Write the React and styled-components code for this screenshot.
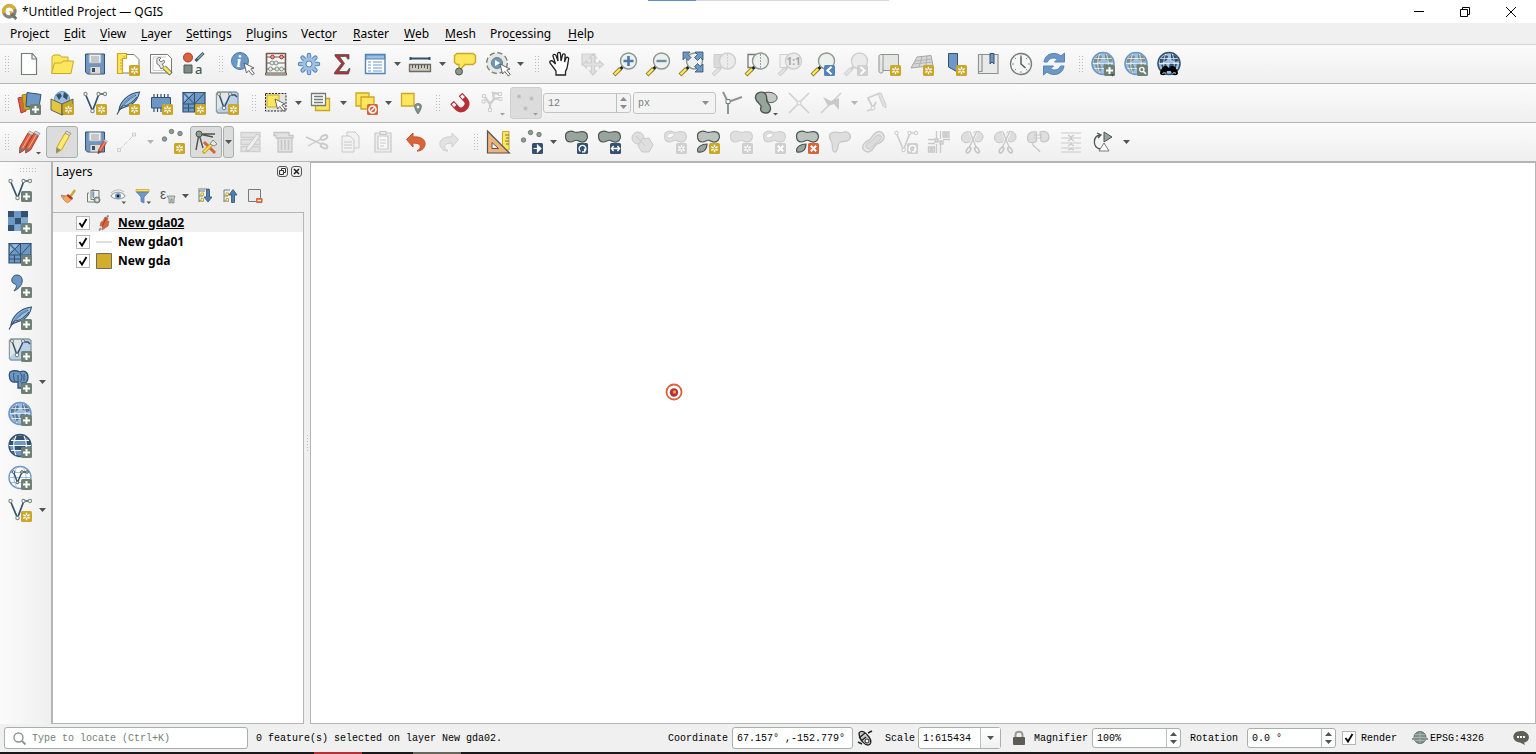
import React from "react";
import styled, { createGlobalStyle, css } from "styled-components";

const C = {
    blue: "#6d97c4",
    sky: "#9dbfe3",
    navy: "#34516f",
    green: "#727e73",
    dark: "#4d5752",
    leaf: "#98a59c",
    yellow: "#fbe65c",
    gold: "#cba728",
    red: "#b53037",
    orange: "#d9643a",
    line: "#b5b5b5",
    off: "#cfcfcf",
    offFill: "#e2e2e2",
};

const uiFont = `"Noto Sans", "Open Sans", sans-serif`;
const monoFont = `"Liberation Mono", "DejaVu Sans Mono", monospace`;

const GlobalStyle = createGlobalStyle`
    * {
        box-sizing: border-box;
    }
    body {
        margin: 0;
        overflow: hidden;
        background: #f0f0f0;
        color: #000;
        font-family: ${uiFont};
        font-size: 12px;
    }
    button, input, select {
        font: inherit;
        color: inherit;
        margin: 0;
        padding: 0;
        border: 0;
        border-radius: 0;
        background: none;
        outline: none;
    }
    svg {
        display: block;
        flex: none;
        overflow: visible;
    }
`;

/* ---------- icons ---------- */

const Svg = ({ children, size = 24, box = 24 }) => (
    <svg width={size} height={size} viewBox={`0 0 ${box} ${box}`} fill="none" aria-hidden="true">
        {children}
    </svg>
);

const badgeFill = {
    star: C.gold, add: "#6f8174", del: C.orange, go: C.navy, turn: C.navy, scale: C.navy, prev: "#5584b8", find: "#6f8174",
    offStar: C.off, offDel: C.off, offNext: C.off, offTurn: C.off,
};

const Badge = ({ kind }) => (
    <g transform="translate(13 13)" stroke="#fff" strokeWidth="1.6">
        <rect width="11" height="11" rx="1.5" fill={badgeFill[kind]} stroke="none" />
        {(kind === "star" || kind === "offStar") && (
            <>
                <path d="M5.5 1.8v7.4M2.3 3.6l6.4 3.8M8.7 3.6 2.3 7.4" strokeWidth="1.4" />
                <circle cx="5.5" cy="5.5" r="1.2" fill={badgeFill[kind]} stroke="none" />
            </>
        )}
        {kind === "add" && <path d="M5.5 2v7M2 5.5h7" strokeWidth="2" />}
        {(kind === "del" || kind === "offDel") && <path d="m2.8 2.8 5.4 5.4m0-5.4L2.8 8.2" strokeWidth="2" />}
        {kind === "go" && <path d="M1.5 5.5h6M5.5 2.2l3.4 3.3-3.4 3.3z" fill="#fff" strokeWidth="1.2" />}
        {(kind === "turn" || kind === "offTurn") && <path d="M3.5 8.5a3.4 3.4 0 1 1 4 0M7.6 5.6v3.2H5" strokeWidth="1.3" />}
        {kind === "scale" && <path d="M1.5 5.5h8M3.6 3 1.4 5.5 3.6 8M7.4 3l2.2 2.5L7.4 8" strokeWidth="1.4" />}
        {kind === "prev" && <path d="M7.6 1.8 3.4 5.5l4.2 3.7" strokeWidth="2" />}
        {kind === "offNext" && <path d="m3.4 1.8 4.2 3.7-4.2 3.7" strokeWidth="2" />}
        {kind === "find" && (
            <>
                <circle cx="4.8" cy="4.6" r="2.2" strokeWidth="1.3" />
                <path d="m6.4 6.4 2.6 2.6" strokeWidth="1.5" />
            </>
        )}
    </g>
);

const MiniArrow = ({ off }) => <path d="M19 22h5l-2.5 2.5z" fill={off ? "#9b9b9b" : C.dark} />;

const Cursor = ({ x, y }) => (
    <path transform={`translate(${x} ${y})`} d="M0 0l2.5 10 2.3-2.5 3.5 4.5 2-1.5-3.5-4.5 3.2-1z" fill="#fff" stroke="#555" strokeWidth=".9" />
);

const Gear = () => (
    <>
        <g stroke="#5584b8" strokeWidth="4.5" strokeLinecap="round">
            <path d="M12 3v18M3 12h18M5.6 5.6l12.8 12.8M18.4 5.6 5.6 18.4" />
        </g>
        <g stroke={C.sky} strokeWidth="2.5" strokeLinecap="round">
            <path d="M12 3v18M3 12h18M5.6 5.6l12.8 12.8M18.4 5.6 5.6 18.4" />
        </g>
        <circle cx="12" cy="12" r="6.5" fill={C.sky} />
        <circle cx="12" cy="12" r="3" fill="#f5f5f5" stroke="#5584b8" />
    </>
);

const Lens = ({ off, children, badge, behind }) => (
    <>
        {behind}
        <path d="M10 14.5 6 18.5" stroke={off ? C.off : "#222"} strokeWidth="3" />
        <path d="M7.5 16.5 1 23" stroke={off ? C.off : "#8b7a2c"} strokeWidth="4" />
        <path d="M7 17 1.6 22.4" stroke={off ? C.offFill : C.yellow} strokeWidth="2.4" />
        <circle cx="15.5" cy="9" r="8" fill={off ? "#ebebeb" : "#edf0ee"} stroke={off ? C.off : "#8b9890"} strokeWidth="1.4" />
        {children}
        {badge && <Badge kind={badge} />}
    </>
);

const Folder = () => (
    <g stroke={C.gold} fill={C.yellow}>
        <path d="M2 21.5V4.5l2-1.5h6l1.5 2H18v4" />
        <path d="M1.5 21.5 4.5 11h7L13 9h10.5L21 21.5z" />
    </g>
);

const Floppy = () => (
    <>
        <path d="M2.5 2h19v20h-17l-2-2z" fill={C.blue} stroke={C.navy} />
        <path d="M6 2.5h12V11H6z" fill="#f1f1f1" stroke="#9aa8b5" />
        <path d="M8 5h8M8 7h8M8 9h8" stroke="#9b9b9b" />
        <path d="M7 14.5h10.5V22H7z" fill="#dcdcdc" stroke="#8e8e8e" />
        <path d="M9 16h3v4H9z" fill={C.navy} />
    </>
);

const Pencil = ({ body = C.yellow, edge = C.gold, tip = "#888" }) => (
    <>
        <path d="M7 17 15 3l4.500 2.500-8 14.500-5 3z" fill={body} stroke={edge} />
        <path d="m9.5 18 8-13.500" stroke="#fff" opacity=".5" />
        <path d="M15 3 16.500 1 21 3.500l-1.500 2z" fill="#ddd" stroke="#999" />
        <path d="m6.500 17.500 4.500 2.600L6 23z" fill={tip} />
    </>
);

const Globe = ({ land = "#7d8f86", stroke = C.blue, badge }) => (
    <>
        <circle cx="12" cy="11.5" r="11.3" fill={C.sky} />
        <path d="M3 7l5-4 3 1-1 4-3 2-4 1zM14 2l5 2 3 5-4 1-4-3zM13 11l7 1-2 6-4 2-2-5zM4 13l5-1 2 5-3 4z" fill={land} />
        <path d="M1 11.5h22M3 6.500h18M3 16.500h18M9 1.500c-3 6-3 14 0 20M15 1.500c3 6 3 14 0 20" stroke="#fff" strokeWidth=".9" opacity=".75" />
        <circle cx="12" cy="11.5" r="11" stroke={stroke} strokeWidth="1.5" />
        {badge && <Badge kind={badge} />}
    </>
);

const Vee = ({ stroke = C.navy, dot = "#7e8c83" }) => (
    <>
        <path d="M3 4.500 9.500 20 15.500 4M16 3h6" stroke={stroke} strokeWidth="1.7" />
        <g fill="#fff" stroke={dot} strokeWidth="1.1">
            <circle cx="2.5" cy="3" r="1.6" />
            <circle cx="15.5" cy="3" r="1.6" />
            <circle cx="22" cy="3" r="1.6" />
            <circle cx="9.5" cy="20" r="1.7" />
        </g>
    </>
);

const Mesh = () => (
    <>
        <path d="M1 1.5h22V21H1z" fill={C.blue} stroke={C.navy} strokeWidth="1.2" />
        <path d="M1 13h22M12.5 1.5V21M1 1.5 12.5 13M12.5 1.5 1 13M12.5 13 23 1.5M1 17h11.5M6.5 13v8" stroke={C.navy} />
        <path d="M2 4l3 3-3 3zM4 2.500h6L7 6z" fill={C.sky} />
    </>
);

const Feather = () => (
    <>
        <path d="M3 19C4 11 12 2 23.500 1c-1 6-4 10-9 13-4 2-8 2-11.500 5z" fill={C.sky} stroke={C.navy} strokeWidth="1.1" />
        <path d="M1 23.500C5 15 12 8 20 4M8 15c5-1 9-4 13-9" stroke={C.navy} strokeWidth="1.1" />
        <path d="M7 14c3-5 7-8 12-10" stroke={C.blue} strokeWidth="2" />
    </>
);

const VirtualBox = () => (
    <>
        <path d="M1.500 2.500 3 1h18l2 1.500V22H3l-1.500-1.500z" fill="#b9d0e8" stroke="#8a9ba5" strokeWidth="1.4" />
        <path d="M2.200 2H13v7l-11 10z" fill="#e3e7e4" />
        <path d="m4 3 5 14 6-13h5l2 2" stroke={C.navy} strokeWidth="1.5" />
        <g fill="#fff" stroke={C.green}>
            <circle cx="4" cy="3" r="1.5" />
            <circle cx="15" cy="3" r="1.5" />
            <circle cx="9" cy="17" r="1.8" />
        </g>
    </>
);

const blobPath = "M1.500 6C1.500 1 7 .5 10.500 2c3 1.200 5-.8 8.500-.3 5 .6 5.500 6.300 3 8.800-2.500 2.500-6 1.500-8.500 0-2.500-1.200-4 1.500-7 1.500-3.500 0-5-2.500-5-6z";

const Blob = ({ off, hole, leaf, badge }) => (
    <>
        <path d={blobPath} fill={off ? "#dfdfdf" : leaf ? "#bcc2be" : C.leaf} stroke={off ? C.off : C.dark} strokeWidth="1.2" />
        {hole && <path d="M4 6.500C4 3 11 2 11 4.500s-6 5.500-7 2z" fill="#f9f9f9" stroke={off ? C.off : C.dark} />}
        {leaf && <path d="M2 22c-2-5 4-8 9-8 0 6-4 9-9 8z" fill={off ? C.offFill : C.leaf} stroke={off ? C.off : C.dark} strokeWidth="1.2" />}
        {badge && <Badge kind={badge} />}
    </>
);

const CutBlobs = () => (
    <g stroke="#c6c6c6" strokeWidth="1.3">
        <g fill="#dedede" strokeWidth="1">
            <path d="M1.500 8c0-5 4-7 9-6l1 9c-4 3-10 2-10-3z" />
            <path d="M14 2c5-2 9 1 9 5s-4 6-8 4z" />
        </g>
        <path d="m9.500 17 7-15M16 17 10 2" stroke="#f5f5f5" strokeWidth="3" />
        <path d="m9.500 17 7-15M16 17 10 2" />
        <g fill="#f5f5f5" strokeWidth="1.7">
            <ellipse cx="8.500" cy="20" rx="1.700" ry="3.200" transform="rotate(30 8.500 20)" />
            <ellipse cx="17" cy="20" rx="1.700" ry="3.200" transform="rotate(-30 17 20)" />
        </g>
    </g>
);

const Dots = () => (
    <g fill="#8f9c93" stroke={C.green}>
        <circle cx="3.5" cy="11" r="2.2" />
        <circle cx="10.5" cy="3.500" r="2.2" />
        <circle cx="19" cy="5.5" r="2.2" />
    </g>
);

const icons = {
    page: <path d="M4.500 1.500h11l4 5v16h-15zM15 1.500V7h4.500" fill="#fff" stroke={C.green} strokeWidth="1.2" />,
    folder: <Folder />,
    floppy: <Floppy />,
    layout: (
        <>
            <path d="M4 2.500h14l5 5V21H4z" fill="#fff" stroke={C.green} />
            <path d="M1.500 1.500h9v5h-4v15h-5z" fill={C.yellow} stroke={C.gold} strokeWidth="1.2" />
            <path d="M4 8h2.500M4 11h2.500M4 14h2.500M4 17h2.500M8 4v2.500" stroke={C.gold} />
            <Badge kind="star" />
        </>
    ),
    layoutManager: (
        <>
            <path d="M1.500 2.500h17l4 4V21h-21z" fill="#fff" stroke={C.green} />
            <path d="M4 5h13M4 5v13.500h14" stroke="#ccc" />
            <path d="M8 9c-1-4 3-4 4-3l-2 2 2 2 3-2c1 3 0 4-2 4l2 3-3 2-2-4c-1 0-3-1-2-4z" fill="#e9e9e9" stroke="#777" />
            <path d="m15 15 7 7" stroke={C.dark} strokeWidth="4.5" />
            <path d="m15 15 6.500 6.500" stroke={C.yellow} strokeWidth="3" />
        </>
    ),
    style: (
        <>
            <circle cx="6" cy="5.5" r="4.5" fill={C.orange} stroke={C.red} />
            <path d="m13.500 9 8-8" stroke={C.navy} strokeWidth="3" />
            <path d="m15.500 7 5.500-5.500" stroke="#8aa79a" strokeWidth="1.5" />
            <path d="M2 13h8v8H2z" fill="#7c8c82" stroke={C.dark} />
            <text x="13" y="21.5" fontFamily="Noto Sans" fontSize="13" fontWeight="500" fill={C.dark}>a</text>
        </>
    ),
    identify: (
        <>
            <circle cx="9" cy="9" r="8.5" fill={C.blue} stroke="#4f7cad" />
            <text x="5.5" y="14.5" fontFamily="Liberation Serif" fontSize="17" fontStyle="italic" fontWeight="bold" fill="#fff">i</text>
            <Cursor x={13} y={11} />
        </>
    ),
    abacus: (
        <>
            <path d="M2.500 1.500h19M2.500 1v21M21.500 1v21" stroke="#6b5f55" strokeWidth="1.6" />
            <path d="M1.500 21h21v2h-21z" fill="#d8d2ca" stroke="#6b5f55" />
            <path d="M3 5h18M3 11h18M3 17h18" stroke="#6b5f55" />
            <g fill="#ef9a80" stroke={C.red}>
                <circle cx="8.5" cy="5" r="1.9" />
                <circle cx="17.5" cy="5" r="1.9" />
            </g>
            <g fill="#e6ece8" stroke="#80908a">
                <circle cx="8" cy="11" r="2" />
                <circle cx="12" cy="11" r="2" />
                <circle cx="6.5" cy="17" r="2" />
                <circle cx="13" cy="17" r="2" />
                <circle cx="17.5" cy="17" r="2" />
            </g>
        </>
    ),
    gear: <Gear />,
    sigma: <path d="M5 2.500h14V7h-1.500c-.5-2-1-2.500-3-2.500h-5l5 7-6 8h7c2 0 2.500-.5 3.500-3h1L18.500 22h-14v-1.500l7-9L5 4z" fill={C.red} stroke={C.dark} strokeWidth=".8" />,
    table: (
        <>
            <path d="M2.500 2.500H22v19H2.500z" fill="#fff" stroke="#5584b8" strokeWidth="1.4" />
            <path d="M3 3h18.500v4H3z" fill={C.sky} stroke="#5584b8" />
            <path d="M5 10h3M10 10h9M5 13h3M10 13h9M5 16h3M10 16h9M5 19h3M10 19h9" stroke={C.blue} strokeWidth="1.2" />
        </>
    ),
    measure: (
        <>
            <path d="M2 6.500h20M2.500 5v3M21.500 5v3" stroke={C.navy} strokeWidth="2" />
            <path d="M1.500 12.500h21v7h-21z" fill="#cfc9be" stroke="#6c6c66" strokeWidth="1.3" />
            <path d="M4.500 13v3M7.500 13v3M10.500 13v4M13.500 13v3M16.500 13v3M19.500 13v4" stroke="#555" />
        </>
    ),
    tip: (
        <>
            <path d="M4 1.500h16l2.500 2v7L20 12.500h-8L6 19v-6.500H4L1.500 10.500v-7z" fill={C.yellow} stroke={C.gold} strokeWidth="1.4" />
            <circle cx="6" cy="19.5" r="3.5" fill="#8a978e" stroke={C.dark} />
        </>
    ),
    action: (
        <>
            <circle cx="11" cy="11" r="9" stroke={C.green} strokeWidth="4" strokeDasharray="4.700 2.360" strokeLinejoin="round" />
            <circle cx="11" cy="11" r="8.5" fill="#e4e7e5" stroke="#e4e7e5" strokeWidth="2.500" />
            <circle cx="11" cy="11" r="5.5" fill={C.blue} stroke={C.green} />
            <path d="M9 8v6l5-3z" fill="#fff" />
            <Cursor x={14} y={12} />
        </>
    ),
    hand: (
        <path
            transform="translate(1 0)"
            d="M8 23v-4l-6-8c-1-2 1.500-3 3-1.500L7.500 12 5 4c-.3-2 2.300-2.300 3-.5L10 9l-.5-7c0-2 3-2 3 0l.5 7 1.500-6c.5-2 3-1.300 2.700.6L16.500 10l1.500-4c1-1.500 3-.6 2.600 1.200C19.500 12 20 16 17.500 19.500V23z"
            fill="#fff"
            stroke="#222"
            strokeWidth="1.3"
        />
    ),
    panSel: (
        <g fill={C.offFill} stroke={C.off} strokeWidth="1.2">
            <path d="M2 2h13v11H2z" />
            <path d="m13 2 3.500 4h-2v5h5V9l4 3.500-4 3.500v-2h-5v5h2L13 23l-3.500-4h2v-5h-5v2l-4-3.500L6.500 9v2h5V6h-2z" />
        </g>
    ),
    zoomIn: <Lens><path d="M15.5 4v10M10.500 9h10" stroke="#4779ad" strokeWidth="2.6" /></Lens>,
    zoomOut: <Lens><path d="M10.500 9h10" stroke="#6c8f9a" strokeWidth="2.4" /></Lens>,
    zoomFull: (
        <Lens>
            <path d="M4 0h7L9 2.500l3 3-3 3-3-3L4 8zM24 0v8l-2.500-2.500-3 3-3-3 3-3L16 0zM24 20h-8l2.500-2.500-3-3 3-3 3 3L24 12z" fill={C.blue} stroke={C.navy} strokeWidth=".8" />
        </Lens>
    ),
    zoomSel: <Lens off behind={<path d="M2 2.500h13v13H2z" fill="#dadada" stroke={C.off} />}><path d="M15.500 2v14" stroke={C.off} strokeDasharray="2 1" /></Lens>,
    zoomLayer: <Lens behind={<path d="M3 2.500h12v13H3z" fill="#f8f8f8" stroke={C.green} strokeWidth="1.3" />}><path d="M15.500 2v14" stroke={C.leaf} strokeDasharray="2 1" /></Lens>,
    zoomNative: <Lens off behind={<path d="M2 2.500h13v13H2z" fill="#f2f2f2" stroke={C.off} />}><text x="8.500" y="12.5" fontFamily="Noto Sans" fontSize="10" fontWeight="bold" fill="#a5a5a5">1:1</text></Lens>,
    zoomLast: <Lens badge="prev" />,
    zoomNext: <Lens off badge="offNext" />,
    newMap: (
        <>
            <path d="M4 2.500h17.500v16H6M2 4v15.500c0 2 4 2 4 0V4c0-2-4-2-4 0z" fill="#e4e6e4" stroke="#8b958e" />
            <Badge kind="star" />
        </>
    ),
    new3d: (
        <>
            <path d="m7 5 14-1.500 2 10L1 16z" fill="#d8d8d8" stroke="#a5a5a5" />
            <path d="m5 9 17-2M3 12l19-2M12 4.500 9 15M17 4l-1 10" stroke="#b2b2b2" />
            <Badge kind="star" />
        </>
    ),
    bookmark: (
        <>
            <path d="M5.500 1.500h9V20l-9-5z" fill={C.blue} stroke={C.navy} />
            <Badge kind="star" />
        </>
    ),
    bookmarks: (
        <>
            <path d="M2.500 2.500H22v19H2.500zM6 2.500v17H2.500" fill="#e9e9e9" stroke="#8b958e" strokeWidth="1.2" />
            <path d="M14 1.500h4V12l-2-2-2 2z" fill={C.blue} stroke={C.navy} />
        </>
    ),
    clock: (
        <>
            <circle cx="12" cy="12" r="10.5" fill="#f6f6f6" stroke={C.green} strokeWidth="1.3" />
            <path d="M12 3v2M12 19v2M3 12h2M19 12h2M5.600 5.600 7 7M17 17l1.400 1.400M18.400 5.600 17 7M7 17l-1.400 1.400" stroke={C.blue} />
            <path d="M12 4.500V12l4.500 4" stroke={C.dark} strokeWidth="1.4" />
        </>
    ),
    refresh: (
        <g fill={C.blue} stroke="#5584b8">
            <path d="M2 10C3 4 7 1.500 12 1.500c3 0 5 1 7 2.500l3.500-3V10h-10l3-3C12 5 7 6 5.500 10z" />
            <path d="M22 14c-1 6-5 8.500-10 8.500-3 0-5-1-7-2.500l-3.500 3V14h10l-3 3c3.500 2 8.500 1 10-3z" />
        </g>
    ),
    globeAdd: <><Globe badge="add" /><MiniArrow /></>,
    globeFind: <Globe badge="find" />,
    globeBino: (
        <>
            <Globe land={C.navy} stroke={C.navy} />
            <path d="M4 21c1-4 3-7 5-7h2l1 1.500h2l1-1.500h2c2 0 4 3 5 7 0 3-6 3-6.500 0l-.5-2h-4l-.5 2C10 24 4 24 4 21z" transform="translate(-1 0)" fill="#000" />
            <path d="M5.500 21.500a2 1.300 0 0 1 3.500 0M15.500 21.500a2 1.300 0 0 1 3.500 0" stroke="#fff" />
        </>
    ),
    sources: (
        <>
            <path d="m1 7 5-1 3 14-5 2z" fill={C.orange} stroke={C.red} />
            <path d="m5 4 6-1 2 15-6 1z" fill={C.gold} stroke="#9d801c" />
            <path d="m10 1.500 14 2-2 13-13-1z" fill={C.blue} stroke={C.navy} />
            <Badge kind="add" />
        </>
    ),
    geopackage: (
        <>
            <circle cx="12" cy="8" r="7.5" fill={C.sky} stroke={C.blue} />
            <path d="M6 4l4-2 2 3-3 4zM14 1l4 3-1 5-4-3z" fill={C.navy} />
            <path d="m1 8 11 5v11L1 19z" fill="#e5c53c" stroke={C.dark} strokeWidth=".9" />
            <path d="m23 8-11 5v11l11-5z" fill={C.gold} stroke={C.dark} strokeWidth=".9" />
            <Badge kind="star" />
        </>
    ),
    veeStar: <><Vee /><Badge kind="star" /></>,
    veeAdd: <><Vee /><Badge kind="add" /></>,
    featherStar: <><Feather /><Badge kind="star" /></>,
    featherAdd: <><Feather /><Badge kind="add" /></>,
    chip: (
        <>
            <path d="M5 3v18M8.500 3v18M12 3v18M15.500 3v18M19 3v18" stroke={C.navy} strokeWidth="1.2" />
            <path d="M2.500 6.500h19V17h-19z" fill={C.blue} stroke={C.navy} />
            <Badge kind="star" />
        </>
    ),
    meshStar: <><Mesh /><Badge kind="star" /></>,
    meshAdd: <><Mesh /><Badge kind="add" /></>,
    virtualStar: <><VirtualBox /><Badge kind="star" /></>,
    virtualAdd: <><VirtualBox /><Badge kind="add" /></>,
    select: (
        <>
            <path d="M1.500 2.500H22V20H1.500z" fill="#e4e4e4" stroke="#222" strokeDasharray="2 1.2" />
            <path d="M3 4h12v12H3z" fill={C.yellow} stroke={C.gold} />
            <Cursor x={11} y={8} />
        </>
    ),
    selectForm: (
        <>
            <path d="M6.500 7.500h14v12h-14z" fill={C.yellow} stroke={C.gold} strokeWidth="1.3" />
            <path d="M2.500 2.500h14v12h-14z" fill="#fff" stroke={C.green} strokeWidth="1.3" />
            <path d="M5 5.500h9M5 8.500h9M5 11.500h9" stroke={C.green} strokeWidth="1.5" />
        </>
    ),
    deselect: (
        <>
            <path d="M2 2h13v13H2z" fill={C.yellow} stroke={C.gold} strokeWidth="1.3" />
            <path d="M7 6h13v12H7z" fill={C.yellow} stroke={C.gold} strokeWidth="1.3" />
            <rect x="13" y="13" width="11" height="11" rx="1.5" fill={C.orange} />
            <circle cx="18.5" cy="18.5" r="3.5" stroke="#fff" strokeWidth="1.5" />
            <path d="m16 21 5-5" stroke="#fff" strokeWidth="1.5" />
        </>
    ),
    selectPin: (
        <>
            <path d="M2.500 2.500H15V15H2.500z" fill={C.yellow} stroke={C.gold} strokeWidth="1.3" />
            <path d="M19 12.500c-5 0-4 5 0 10.500 4-5.500 5-10.500 0-10.500z" fill="#84928a" stroke={C.dark} strokeWidth=".6" />
            <circle cx="19" cy="16" r="1.3" fill="#fff" />
        </>
    ),
    magnet: (
        <>
            <path d="m4 11.500 5.500 6c4.500 4.500 12.500-3 8.500-8L12.500 3.500" stroke={C.red} strokeWidth="5" />
            <path d="m4.800 12.400 2.400 2.600M13.300 4.400 15.700 7" stroke="#fff" strokeWidth="3" />
        </>
    ),
    topology: (
        <>
            <path d="m3 5 6 8 4-5 6-1M13 8l-1-6 7 1M9 13v6" stroke={C.off} strokeWidth="2.4" />
            <g fill="#f2f2f2" stroke={C.off}>
                <path d="M1.500 3.500h3v3h-3zM17.500 1.500h3v3h-3zM18 6.500h3v3h-3zM7.500 17.500h3v3h-3zM1 9h3v3H1z" />
            </g>
            <MiniArrow off />
        </>
    ),
    snapDots: (
        <>
            <path d="M3.500 4h3v3h-3zM16 6h3v3h-3zM10 16h3v3h-3z" fill="#b9b9b9" stroke="#c8c8c8" />
            <MiniArrow off />
        </>
    ),
    junction: (
        <>
            <path d="m2 1 5 10v12M7 11l14-5" stroke="#8c9990" strokeWidth="2" />
            <path d="M5 8.500h4v4H5z" fill="#fff" stroke={C.green} />
        </>
    ),
    blobs: (
        <>
            <path d="M10 2c5-2 12 0 13 4s-5 7-9 5z" fill="#c4cac6" stroke={C.dark} />
            <path d="M1.500 7C1 1 10-1 12 4c2 5-1 5 2 8 4 4 3 10-2 10s-6-3-5-6-5-4-5.500-9z" fill={C.leaf} stroke={C.dark} strokeWidth="1.4" />
            <MiniArrow />
        </>
    ),
    cross: <><path d="m2 2 20 20M22 2 2 22" stroke={C.off} strokeWidth="1.6" /><circle cx="12" cy="12" r="2" fill="#f2f2f2" stroke={C.off} /></>,
    crossFill: <><path d="M1 22 21 2" stroke={C.off} strokeWidth="1.6" /><path d="m3 6 8 4 8-3v12l-5-6-6 2z" fill="#c9c9c9" /></>,
    trace: <><path d="m2 20 6-2M8 17 3 7l12-5M8 17l3-6" stroke={C.off} strokeWidth="1.8" /><circle cx="8" cy="17" r="2" fill="#f2f2f2" stroke={C.off} /><path d="m13 3 3-1 5 12v3l-3-2z" fill={C.offFill} stroke={C.off} /></>,
    edits: (
        <>
            <g transform="translate(-4 0)"><Pencil body={C.orange} edge={C.red} tip="#777" /></g>
            <g transform="translate(2 0)"><Pencil body={C.orange} edge={C.red} tip="#777" /></g>
            <MiniArrow />
        </>
    ),
    pencil: <Pencil />,
    saveEdits: <><Floppy /><g transform="translate(11 9) scale(.64)"><Pencil body={C.orange} edge={C.red} tip="#555" /></g></>,
    lineOff: <><path d="M3 20 19 4" stroke={C.off} strokeDasharray="5 2" /><path d="M1.500 18.500h3v3h-3zM16.500 3h3v3h-3z" fill="#eee" stroke={C.off} /></>,
    addPoint: <><g transform="translate(0 -2)"><Dots /></g><Badge kind="star" /></>,
    vertex: (
        <>
            <path d="M3 4h18M5 4 2 20M5 4l4 14M5 4l14 3" stroke={C.dark} strokeWidth="1.4" />
            <circle cx="5" cy="4" r="3" fill="#8f9c93" stroke={C.dark} />
            <path d="m10 12 11 11" stroke={C.orange} strokeWidth="3" />
            <path d="m9 23 9-9" stroke={C.gold} strokeWidth="3.5" />
            <path d="m10 22 8-8" stroke={C.yellow} strokeWidth="1.6" />
            <path d="m16 14 3-4 4 4-3 2z" fill="#e8e8e8" stroke="#888" />
        </>
    ),
    attrsOff: <><path d="M2 2.500h19v5H2zM2 9.500h19v5H2zM2 16.500h19v5H2z" fill={C.offFill} stroke={C.off} strokeWidth="1.3" /><path d="M8 17 18 4l3 2-10 14-4 1z" fill="#eee" stroke="#c6c6c6" /></>,
    trashOff: <><path d="M2 2.500h15v3h4V8H4V5.500H2zM6 8h14v14H6z" fill={C.offFill} stroke="#c6c6c6" strokeWidth="1.3" /><path d="M9.500 10v10M13 10v10M16.500 10v10" stroke="#c6c6c6" strokeWidth="1.5" /></>,
    cutOff: (
        <g stroke="#c9c9c9" strokeWidth="1.4">
            <path d="m1 7 15 7M3 16l13-7" />
            <g fill="#f5f5f5" strokeWidth="1.8">
                <ellipse cx="19" cy="7.5" rx="3.6" ry="2" transform="rotate(-24 19 7.5)" />
                <ellipse cx="19" cy="16" rx="3.6" ry="2" transform="rotate(24 19 16)" />
            </g>
        </g>
    ),
    copyOff: <g fill="#f2f2f2" stroke="#c9c9c9"><path d="M9 2h8l4 4v12H9z" /><path d="M4 6h8l4 4v12H4z" /><path d="M6 12h8M6 15h8M6 18h8" /></g>,
    pasteOff: <g fill="#ededed" stroke="#c9c9c9" strokeWidth="1.2"><path d="M4 3h16v19H4z" /><path d="M7 6h10v13H7z" fill="#f8f8f8" /><path d="M9 1.500h6v3H9zM9 10h6M9 13h6M9 16h4" /></g>,
    undo: <path d="M2.500 9.500 9 3v4c8-1 13 3 12 8-1 4-4 6-8 6 5-3 5-8-4-8v4z" fill={C.orange} stroke="#c8542c" />,
    redoOff: <path d="M21.500 9.500 15 3v4C7 6 2 10 3 15c1 4 4 6 8 6-5-3-5-8 4-8v4z" fill={C.offFill} stroke={C.off} />,
    digitize: (
        <>
            <path d="M16.500 1.500H23V20h-6.500z" fill={C.yellow} stroke={C.gold} />
            <path d="M1.500 1v22h22z" fill="#eeb27a" stroke={C.dark} strokeWidth="1.2" />
            <path d="M6 12.500v6h6.500z" fill="#fff" stroke={C.dark} />
            <path d="M19 5h4M20 8h3M19 11h4M20 14h3" stroke={C.dark} strokeWidth=".8" />
        </>
    ),
    move: <><g transform="translate(1 -1)"><Dots /></g><Badge kind="go" /></>,
    rotate: <Blob badge="turn" />,
    scale: <Blob badge="scale" />,
    simplifyOff: <g fill="#dedede" stroke="#c9c9c9"><circle cx="8" cy="8" r="6" /><path d="m12 9 7-1 4 7-4 7h-7l-4-6z" /><path d="m6 6 9 10" /></g>,
    ringOff: <Blob off hole badge="offStar" />,
    part: <Blob leaf badge="star" />,
    fillRingOff: <Blob off badge="offStar" />,
    delRingOff: <Blob off hole badge="offDel" />,
    delPart: <Blob leaf badge="del" />,
    reshapeOff: <path d="M2 4c4-4 9 0 14-2 6-1 8 5 5 8-4 3-8 0-10 3s0 8-4 9c-4 0-2-6-3-9S0 8 2 4z" fill="#dedede" stroke="#c9c9c9" strokeWidth="1.3" />,
    offsetOff: <><path d="M4 21c-5-4-1-9 4-11 3-1 3-6 8-8s9 4 6 8-6 3-8 6-5 8-10 5z" fill="#e8e8e8" stroke="#c9c9c9" strokeWidth="1.4" /><path d="M6 18c-3-2 0-5 3-6s4-6 8-7 4 3 2 5-5 3-7 6-3 4-6 2z" fill="#dcdcdc" stroke="#c9c9c9" /></>,
    reverseOff: <><Vee stroke={C.off} dot={C.off} /><Badge kind="offTurn" /></>,
    splitOff: (
        <g stroke="#c9c9c9" strokeWidth="1.3">
            <path d="M9.500 1v8M13.500 1v8M9.500 14v9M13.500 14v9M1 9.500h7M1 13.500h7M16 9.500h7" />
            <path d="M8 9h3v3H8zM13 11h3v3h-3zM16 2h6v5h-6zM1.500 17h6v5h-6z" fill={C.offFill} />
            <path d="m17.500 3 3 3m0-3-3 3M3 18l3 3m0-3-3 3" />
        </g>
    ),
    splitFeatureOff: <CutBlobs />,
    splitPartOff: <CutBlobs />,
    mergeOff: <g fill="#dedede" stroke="#c6c6c6" strokeWidth="1.2"><path d="M1.500 8c0-5 4-7 9-6v9c-4 3-9 2-9-3z" /><path d="M14 2c5-2 9 1 9 5s-4 6-8 4z" /><path d="M8 5h8M8 8h8M7 13c-2 3 5 5 7 9" fill="none" /></g>,
    mergeAttrOff: <g stroke="#c9c9c9" strokeWidth="1.2"><path d="M2 3h20M2 8h20M2 13h20M2 18h20M2 22h20M9 5l3 2 3-2M9 11l3-2 3 2M9 16l3-2 3 2M9 20l3-1 3 1" /></g>,
    flip: <><path d="M12 2v10l8-5z" fill={C.leaf} stroke={C.dark} /><path d="m12 13 5 8H7z" fill="#fff" stroke={C.green} /><path d="M8 19C0 17 1 6 8 5M5 3l4 2-3 3" stroke={C.dark} strokeWidth="1.3" /></>,
    raster: (
        <>
            <path d="M0 1h20v20H0z" fill={C.blue} />
            <path d="M0 1h6v6H0zM13 1h7v6h-7zM7 8h6v6H7zM0 15h6v6H0z" fill={C.navy} />
            <path d="M13 8h7v6h-7zM7 15h5v6H7z" fill="#82a9d4" />
            <Badge kind="add" />
        </>
    ),
    comma: (
        <>
            <path d="M9 1c7 0 8 11-3 16 3-4 3-6 1-7-5-1-4-9 2-9z" fill={C.blue} stroke={C.navy} />
            <Badge kind="add" />
        </>
    ),
    elephant: (
        <>
            <path d="M2 2c4-2 8-1 10 0 4-2 8 0 8 5 0 4-2 6-3 6h-3v5h-4v-6H6C2 12 0 6 2 2z" fill={C.blue} stroke={C.navy} strokeWidth="1.3" />
            <path d="M6 3c-1 3 0 7 1 8M12 3c3 2 2 7 0 9M10 5v7M16 4v7" stroke={C.navy} />
            <Badge kind="add" />
        </>
    ),
    wms: <Globe land="#5b7792" badge="add" />,
    xyz: (
        <>
            <circle cx="12" cy="11.5" r="11" fill={C.blue} stroke={C.navy} strokeWidth="1.4" />
            <path d="M7 2h10l1 4.500H6zM1.500 7h5v4.500h-5zM17.500 7h5v4.500h-5zM7 12h10v4.500H7zM3 17h4l2 4zM17 17h4l-6 4z" fill={C.navy} />
            <path d="M1 11.5h22M3 6.500h18M3 16.500h18M8 2C5 8 5 15 8 21M16 2c3 6 3 13 0 19" stroke="#fff" strokeWidth="1.1" />
            <Badge kind="add" />
        </>
    ),
    wfs: (
        <>
            <circle cx="12" cy="11.5" r="11" fill="#fff" stroke={C.blue} strokeWidth="1.4" />
            <path d="M1 11.5h22M3 6.500h18M3 16.500h18M9 1C5 8 5 15 9 22M15 1c4 7 4 14 0 21" stroke={C.sky} />
            <path d="m5.500 6 4 10.500L14 6h5" stroke={C.navy} strokeWidth="1.5" />
            <g fill="#fff" stroke={C.dark}><circle cx="5.5" cy="6" r="1.3" /><circle cx="14" cy="6" r="1.3" /><circle cx="19" cy="6" r="1.3" /><circle cx="9.5" cy="16.5" r="1.3" /></g>
            <Badge kind="add" />
        </>
    ),
};

const panelIcons = {
    brush: <><path d="m15 2-5 7" stroke={C.gold} strokeWidth="2.4" /><path d="m8 6 5 4-1 2-6-4z" fill={C.red} /><path d="M1 7l6 1 4 4c-2 3-4 3-5 2-1-1-4-3-5-7z" fill="#f2a85e" stroke={C.orange} strokeWidth=".6" /><path d="m2 7 3 1-1 2z" fill={C.blue} /></>,
    group: <><path d="M6 2.500h8v9H6zM4 5H2.500v9H10M8 1v8" stroke={C.green} /><path d="M8.500 4v6" stroke={C.blue} strokeWidth="1.4" /><circle cx="12" cy="12" r="3" fill={C.leaf} stroke={C.green} /><path d="M12 10.500v3M10.500 12h3" stroke="#fff" /></>,
    eye: <><path d="M1 8c3-5 11-5 14 0-3 4-11 4-14 0z" fill="#fff" stroke="#9aa39d" strokeWidth="1.2" /><circle cx="8" cy="8" r="3" fill={C.blue} /><circle cx="8" cy="8" r="1.2" fill="#111" /><path d="M1 5c4-4 10-4 13-1" stroke="#b5bbb7" /><path d="M11.500 13.500H16L13.800 16z" fill={C.dark} /></>,
    funnel: <><path d="M1 1.500h13v2.200H1z" fill={C.yellow} stroke={C.gold} strokeWidth=".8" /><path d="M1.500 4h12L9 9v6l-3-1.500V9z" fill={C.blue} stroke="#4f7cad" strokeWidth=".8" /><path d="M11.500 13.500H16L13.800 16z" fill={C.dark} /></>,
    expr: <><text x="0" y="11" fontFamily="Liberation Sans" fontSize="14" fill={C.dark}>ε</text><path d="M7 8h8l-1 3v4h-2v-4h-1v4H9v-4z" fill="#c5cbc7" stroke={C.green} strokeWidth=".7" /></>,
    expand: <><path d="M2 2v12M2 3h6M2 8h4M2 13h5M12 1H1" stroke={C.green} /><path d="M4 5h2.500v2.500H4zM4 10.500h2.500V13H4z" fill="#fff" stroke={C.gold} /><path d="M9.500 1.500h3V9H15l-4 5-4-5h2.500z" fill="#4c7fb8" stroke={C.navy} strokeWidth=".8" /></>,
    collapse: <><path d="M2 2v12M2 2h6M2 8h4M2 13h5" stroke={C.green} /><path d="M4 5h2.500v2.500H4zM4 10.500h2.500V13H4z" fill="#fff" stroke={C.gold} /><path d="M9.500 14.500h3V7H15l-4-5.500L7 7h2.500z" fill="#4c7fb8" stroke={C.navy} strokeWidth=".8" /></>,
    remove: <><path d="M1.500 1.500h12v12h-12z" fill="#ececec" stroke={C.green} /><rect x="9" y="10" width="6.5" height="5" rx="1" fill={C.orange} /><path d="M10.500 12.500H14" stroke="#fff" strokeWidth="1.4" /></>,
};

/* ---------- window frame ---------- */

const Window = styled.div`
    display: flex;
    flex-direction: column;
    min-height: 100vh;
`;

const TitleBar = styled.header`
    display: flex;
    align-items: center;
    height: 23px;
    padding: 0 2px;
    background: linear-gradient(90deg, #5a8fd0 0 48px, #d8d8d8 48px) top center / 241px 1px no-repeat #fff;
`;

const Title = styled.h1`
    flex: 1;
    margin: 0 0 0 4px;
    font-size: 12px;
    font-weight: 400;
`;

const WindowButton = styled.button`
    display: grid;
    place-items: center;
    width: 46px;
    height: 20px;
`;

const MenuBar = styled.nav`
    display: flex;
    gap: 14px;
    height: 22px;
    padding: 0 10px;
    align-items: center;
    border-bottom: 1px solid #d6d6d6;
`;

const MenuItem = styled.button`
    width: ${p => p.$width}px;
    text-align: left;
    white-space: nowrap;
    line-height: 20px;
    & > u {
        text-underline-offset: 2px;
    }
`;

/* ---------- toolbars ---------- */

const Toolbar = styled.div`
    display: flex;
    align-items: center;
    height: 39px;
    border-bottom: 1px solid ${C.line};
    background: linear-gradient(#fbfbfb, #efefef);
`;

const dots = css`
    background: radial-gradient(circle, #bdbdbd 0 1px, transparent 1px) 0 0 / 3px 3px;
`;

const Handle = styled.span`
    width: 16px;
    height: 18px;
    padding: 0 4px 0 7px;
    &::before {
        content: "";
        display: block;
        height: 18px;
        ${dots}
    }
    &:first-child {
        width: 13px;
        padding-left: 4px;
    }
`;

const ToolButton = styled.button`
    display: grid;
    place-items: center;
    flex: none;
    width: 32px;
    height: 32px;
    margin-right: 1px;
    border: 1px solid transparent;
    border-radius: 3px;
    ${p => p.$on && css`
        border-color: #a9afab;
        background: #dcdcdc;
    `}
    ${p => p.$on && p.disabled && css`
        border-color: #cfcfcf;
    `}
`;

const ArrowButton = styled.button`
    display: grid;
    place-items: center;
    flex: none;
    width: 10px;
    height: 32px;
    margin-right: 2px;
    color: ${p => (p.disabled ? "#b5b5b5" : C.dark)};
    ${p => p.$on && css`
        width: 11px;
        margin-right: 1px;
        border: 1px solid #a9afab;
        border-radius: 3px;
        background: #dcdcdc;
    `}
`;

const Triangle = ({ up }) => (
    <svg width="7" height="4" viewBox="0 0 7 4" aria-hidden="true">
        <path d={up ? "M0 4h7L3.500 0z" : "M0 0h7L3.500 4z"} fill="currentColor" />
    </svg>
);

const Arrow = ({ label, off, on }) => (
    <ArrowButton type="button" aria-label={label} disabled={off} $on={on}>
        <Triangle />
    </ArrowButton>
);

const Field = styled.div`
    display: flex;
    flex: none;
    position: relative;
    width: ${p => p.$width}px;
    height: ${p => p.$height || 22}px;
    border: 1px solid ${p => (p.$off ? "#c4c4c4" : "#a8b0ab")};
    border-radius: 3px;
    background: ${p => (p.$off ? "#f3f3f3" : "#fff")};
    color: ${p => (p.$off ? "#7b7f7c" : "#000")};
    font-family: ${monoFont};
    font-size: 10px;
    & > input, & > select {
        flex: 1;
        min-width: 0;
        padding: 0 4px;
        appearance: none;
        opacity: 1;
    }
`;

const Steps = styled.div`
    display: flex;
    flex-direction: column;
    justify-content: center;
    gap: 3px;
    width: 14px;
    border-left: 1px solid #b9bfbb;
    color: ${p => (p.$off ? "#8d8d8d" : C.dark)};
    & > button {
        display: grid;
        place-items: center;
        height: 5px;
    }
`;

const DropMark = styled.span`
    display: grid;
    place-items: center;
    position: absolute;
    top: 0;
    right: 0;
    bottom: 0;
    width: 20px;
    pointer-events: none;
    color: ${p => (p.$plain ? "#8d8d8d" : C.dark)};
    border-left: ${p => (p.$plain ? "0" : "1px solid #b9bfbb")};
    background: ${p => (p.$plain ? "none" : "linear-gradient(#fff, #f0f0f0)")};
`;

const Spin = ({ id, label, value, width, height, off }) => (
    <Field $width={width} $height={height} $off={off}>
        <input id={id} aria-label={label} defaultValue={value} disabled={off} />
        <Steps $off={off}>
            <button type="button" aria-label="Increase" disabled={off}><Triangle up /></button>
            <button type="button" aria-label="Decrease" disabled={off}><Triangle /></button>
        </Steps>
    </Field>
);

const SnapFields = styled.div`
    display: flex;
    align-items: center;
    gap: 2px;
    margin-right: 1px;
`;

const Snapping = () => (
    <SnapFields>
        <Spin label="Snapping tolerance" value="12" width={88} height={20} off />
        <Field $width={83} $off>
            <select aria-label="Tolerance unit" defaultValue="px" disabled>
                <option>px</option>
            </select>
            <DropMark $plain><Triangle /></DropMark>
        </Field>
    </SnapFields>
);

// "|" is a handle, "v" a menu arrow, "v-" a disabled one, "v+" a pressed one.
// A leading "!" disables the tool and a leading "*" presses it.
const rows = [
    {
        label: "Project and map navigation",
        tools: "| page folder floppy layout layoutManager style | identify abacus gear sigma table v measure v tip action v | hand !panSel zoomIn zoomOut zoomFull !zoomSel zoomLayer !zoomNative zoomLast !zoomNext newMap new3d bookmark bookmarks clock refresh | globeAdd globeFind globeBino",
    },
    {
        label: "Layers, selection and snapping",
        tools: "| sources geopackage veeStar featherStar chip meshStar virtualStar | select v selectForm v deselect v selectPin | magnet !topology !*snapDots snapping junction blobs !cross !crossFill v- !trace",
    },
    {
        label: "Digitizing",
        tools: "| edits *pencil saveEdits !lineOff v- addPoint *vertex v+ !attrsOff !trashOff !cutOff !copyOff !pasteOff undo !redoOff | digitize move v rotate scale !simplifyOff !ringOff part !fillRingOff !delRingOff delPart !reshapeOff !offsetOff !reverseOff !splitOff !splitFeatureOff !splitPartOff !mergeOff !mergeAttrOff flip v",
    },
];

const renderTool = (token, i) => {
    if (token === "|") return <Handle key={i} />;
    if (token === "snapping") return <Snapping key={i} />;
    if (token[0] === "v" && token.length < 3) {
        return <Arrow key={i} label="More" off={token === "v-"} on={token === "v+"} />;
    }
    const name = token.replace(/[!*]/g, "");
    return (
        <ToolButton key={i} type="button" aria-label={name} disabled={token.includes("!")} $on={token.includes("*")}>
            <Svg>{icons[name]}</Svg>
        </ToolButton>
    );
};

/* ---------- body ---------- */

const Body = styled.main`
    display: flex;
    flex: 1;
`;

const SideBar = styled.aside`
    display: flex;
    flex-direction: column;
    flex: none;
    width: 53px;
    padding: 5px 0 0 4px;
    border-right: 2px solid ${C.line};
    background: linear-gradient(90deg, #fbfbfb, #efefef);
`;

const SideHandle = styled.span`
    width: 18px;
    height: 6px;
    margin: 0 0 1px 15px;
    ${dots}
`;

const SideRow = styled.div`
    display: flex;
    height: 32px;
`;

const sideTools = ["veeAdd", "raster", "meshAdd", "comma", "featherAdd", "virtualAdd", "elephant", "wms", "xyz", "wfs", "veeStar"];

const Dock = styled.section`
    display: flex;
    flex-direction: column;
    flex: none;
    width: 251px;
`;

const DockHeader = styled.div`
    display: flex;
    align-items: center;
    gap: 3px;
    height: 19px;
    padding: 0 2px 0 3px;
    & > h2 {
        flex: 1;
        margin: 0;
        font-size: 12px;
        font-weight: 400;
    }
    & > button {
        display: grid;
        place-items: center;
        width: 11px;
        height: 11px;
        border: 1px solid #555;
        border-radius: 3px;
    }
`;

const DockTools = styled.div`
    display: flex;
    align-items: center;
    height: 31px;
    padding: 0 0 1px 2px;
`;

const DockButton = styled.button`
    display: grid;
    place-items: center;
    width: 25px;
    height: 26px;
`;

const Tree = styled.ul`
    flex: 1;
    margin: 0;
    padding: 0;
    list-style: none;
    border: 1px solid ${C.line};
    border-left: 0;
    background: #fff;
`;

const TreeRow = styled.li`
    display: flex;
    align-items: center;
    height: 19px;
    padding-left: 23px;
    background: ${p => (p.$current ? "#f0f0f0" : "none")};
    & > label {
        display: flex;
        align-items: center;
        gap: 6px;
        font-weight: 700;
        text-decoration: ${p => (p.$current ? "underline" : "none")};
    }
`;

const Check = styled.input.attrs({ type: "checkbox" })`
    appearance: none;
    flex: none;
    width: 14px;
    height: 14px;
    border: 1px solid #b5b5b5;
    background: #fff;
    &:checked {
        background: #fff url("data:image/svg+xml,%3Csvg xmlns='http://www.w3.org/2000/svg' viewBox='0 0 12 12'%3E%3Cpath d='M2.5 6l2.5 3.5L9.500 2' fill='none' stroke='%23000' stroke-width='1.8'/%3E%3C/svg%3E") center / 12px 12px;
    }
`;

const Symbol = ({ kind }) => (
    <Svg size={16} box={16}>
        {kind === "point" && (
            <>
                <path d="M11 2 12.500.5M3 15.500 5 13" stroke="#8b8b8b" strokeWidth="1.8" />
                <path d="m9 2 3 1-1 4 2-1-1 5-6 4 1-5-3 1 1-4 2-1z" fill={C.orange} stroke="#a8705c" strokeWidth=".8" />
                <path d="m10 3-4 9" stroke={C.red} />
            </>
        )}
        {kind === "line" && <path d="M0 8h16" stroke="#d5d5d5" strokeWidth="1.6" />}
        {kind === "fill" && <path d="M.5.5h15v15H.5z" fill="#d2ae2c" stroke="#6b6b5e" />}
    </Svg>
);

const layers = [
    { name: "New gda02", kind: "point", current: true },
    { name: "New gda01", kind: "line" },
    { name: "New gda", kind: "fill" },
];

const Splitter = styled.div`
    display: grid;
    place-items: center;
    width: 6px;
    &::before {
        content: "";
        width: 3px;
        height: 18px;
        ${dots}
    }
`;

const Canvas = styled.section`
    flex: 1;
    position: relative;
    border: 1px solid ${C.line};
    background: #fff;
`;

const Snap = styled.div`
    position: absolute;
    left: 354px;
    top: 220px;
`;

/* ---------- status bar ---------- */

const StatusBar = styled.footer`
    display: flex;
    align-items: center;
    height: 30px;
    padding: 0 7px 0 4px;
    border: solid #1c181a;
    border-image: linear-gradient(90deg, #1c181a 0 315px, #b53037 315px 363px, #1c181a 363px 413px, #6b665c 413px 461px, #1c181a 461px) 1;
    border-width: 0 0 2px;
    font-family: ${monoFont};
    font-size: 10px;
    white-space: pre;
`;

const Locator = styled(Field)`
    align-items: center;
    padding-left: 8px;
    & > input {
        padding-left: 6px;
    }
    & > input::placeholder {
        color: #6f7f76;
        opacity: 1;
    }
`;

const Message = styled.span`
    flex: 1;
    padding-left: 8px;
`;

const Group = styled.div`
    display: flex;
    align-items: center;
    gap: ${p => p.$gap || 4}px;
    margin-left: ${p => p.$before || 0}px;
`;

const StatusButton = styled.button`
    display: flex;
    align-items: center;
    gap: 2px;
`;

const menus = [
    ["Pro", "j", "ect", 40], ["", "E", "dit", 22], ["", "V", "iew", 27], ["", "L", "ayer", 31],
    ["", "S", "ettings", 46], ["", "P", "lugins", 41], ["Vect", "o", "r", 38], ["", "R", "aster", 37],
    ["", "W", "eb", 27], ["", "M", "esh", 31], ["Pro", "c", "essing", 64], ["", "H", "elp", 27],
];

const App = () => (
    <Window>
        <GlobalStyle />
        <TitleBar>
            <Svg size={16}>
                <circle cx="11" cy="11" r="8.5" stroke="#7f8378" strokeWidth="5" />
                <path d="M3 14A8.500 8.500 0 0 1 19 8" stroke="#d9b02c" strokeWidth="5" />
                <path d="m12 12 3 0 8 9-3 3-8-8z" fill="#6f7369" />
                <path d="m11 10 6 2-4 4z" fill="#f0a030" />
            </Svg>
            <Title>*Untitled Project — QGIS</Title>
            <WindowButton type="button" aria-label="Minimize"><Svg size={12} box={12}><path d="M1 5.500h10" stroke="#000" /></Svg></WindowButton>
            <WindowButton type="button" aria-label="Restore"><Svg size={12} box={12}><path d="M1.500 3.500h7v7h-7zM3.500 3.500v-2h7v7h-2" stroke="#000" /></Svg></WindowButton>
            <WindowButton type="button" aria-label="Close"><Svg size={12} box={12}><path d="m1 1 10 10M11 1 1 11" stroke="#000" /></Svg></WindowButton>
        </TitleBar>
        <MenuBar>
            {menus.map(([before, key, after, width]) => (
                <MenuItem key={before + key + after} type="button" $width={width}>{before}<u>{key}</u>{after}</MenuItem>
            ))}
        </MenuBar>
        {rows.map(row => (
            <Toolbar key={row.label} role="toolbar" aria-label={row.label}>
                {row.tools.split(" ").map(renderTool)}
            </Toolbar>
        ))}

        <Body>
            <SideBar>
                <SideHandle />
                {sideTools.map(name => (
                    <SideRow key={name}>
                        <ToolButton type="button" aria-label={name}><Svg>{icons[name]}</Svg></ToolButton>
                        {(name === "elephant" || name === "veeStar") && <Arrow label="More" />}
                    </SideRow>
                ))}
            </SideBar>

            <Dock>
                <DockHeader>
                    <h2>Layers</h2>
                    <button type="button" aria-label="Float"><Svg size={7} box={7}><path d="M.5 2.500h4v4h-4zM2.500 2.500v-2h4v4h-2" stroke="#333" /></Svg></button>
                    <button type="button" aria-label="Close panel"><Svg size={7} box={7}><path d="m1 1 5 5M6 1 1 6" stroke="#222" strokeWidth="1.6" /></Svg></button>
                </DockHeader>
                <DockTools role="toolbar" aria-label="Layer tools">
                    {Object.entries(panelIcons).map(([name, icon]) => (
                        <React.Fragment key={name}>
                            <DockButton type="button" aria-label={name}><Svg size={16} box={16}>{icon}</Svg></DockButton>
                            {name === "expr" && <Arrow label="More" />}
                        </React.Fragment>
                    ))}
                </DockTools>
                <Tree>
                    {layers.map(layer => (
                        <TreeRow key={layer.name} $current={layer.current}>
                            <label>
                                <Check defaultChecked />
                                <Symbol kind={layer.kind} />
                                {layer.name}
                            </label>
                        </TreeRow>
                    ))}
                </Tree>
            </Dock>
            <Splitter />
            <Canvas aria-label="Map">
                <Snap>
                    <Svg size={18} box={18}>
                        <circle cx="9" cy="9" r="7.5" fill="#fff" stroke={C.orange} strokeWidth="1.8" />
                        <circle cx="9" cy="9.5" r="4.2" fill={C.red} />
                        <circle cx="9.5" cy="9" r="1.8" fill="#ee9a5a" />
                    </Svg>
                </Snap>
            </Canvas>
        </Body>

        <StatusBar>
            <Locator $width={244}>
                <Svg size={13} box={13}><circle cx="5.5" cy="5.5" r="4.5" stroke="#8c9690" strokeWidth="1.4" /><path d="m9 9 3.500 3.500" stroke="#8c9690" strokeWidth="2" /></Svg>
                <input aria-label="Locator" placeholder="Type to locate (Ctrl+K)" />
            </Locator>
            <Message>0 feature(s) selected on layer New gda02.</Message>
            <Group>
                <label htmlFor="coord">Coordinate</label>
                <Field $width={121}><input id="coord" defaultValue="67.157° ,-152.779°" /></Field>
                <StatusButton type="button" aria-label="Toggle extents">
                    <Svg size={16} box={16}>
                        <path d="M2 3c3-4 7 0 10 4s2 8-1 8-9-5-9-12z" fill="#ccc" stroke="#222" strokeWidth="1.3" />
                        <circle cx="10" cy="11" r="2" fill="#fff" stroke="#222" />
                        <path d="m2 8 6-5M4 11l5-4M11 3l4-2M1 12l4 2" stroke="#222" strokeWidth="1.4" />
                    </Svg>
                </StatusButton>
            </Group>
            <Group $before={12} $gap={3}>
                <label htmlFor="scale">Scale</label>
                <Field $width={83}>
                    <select id="scale" defaultValue="1:615434"><option>1:615434</option></select>
                    <DropMark><Triangle /></DropMark>
                </Field>
            </Group>
            <Group $before={10}>
                <StatusButton type="button" aria-label="Lock scale">
                    <Svg size={16} box={16}><path d="M4.500 8V5c0-4.500 7-4.500 7 0v3" stroke="#9a9a90" strokeWidth="2" /><rect x="2" y="7" width="12" height="8" rx="1" fill="#5c5c52" /></Svg>
                </StatusButton>
            </Group>
            <Group $before={7}>
                <label htmlFor="magnifier">Magnifier</label>
                <Spin id="magnifier" value="100%" width={89} height={20} />
            </Group>
            <Group $before={9} $gap={9}>
                <label htmlFor="rotation">Rotation</label>
                <Spin id="rotation" value="0.0 °" width={89} height={20} />
            </Group>
            <Group $before={6} $gap={5}>
                <Check id="render" defaultChecked />
                <label htmlFor="render">Render</label>
            </Group>
            <Group $before={15}>
                <StatusButton type="button">
                    <Svg size={16} box={16}>
                        <circle cx="8" cy="7.5" r="6" fill="#7f9189" stroke="#5f6e66" />
                        <path d="M2 7.500h12M3 4.500h10M3 10.500h10M8 1.500v12" stroke="#b5c0ba" strokeWidth=".7" />
                        <path d="M0 8h3v2H0zM13 8h3v2h-3z" fill="#8c9690" />
                    </Svg>
                    EPSG:4326
                </StatusButton>
            </Group>
            <Group $before={29}>
                <StatusButton type="button" aria-label="Messages">
                    <Svg size={16} box={16}><path d="M8 1c10 0 10 11 3 11.500L12 15l-5-2.500C-2 12-2 1 8 1z" fill="#5f5f55" /><path d="M4 7h2M7 7h2M10 7h2" stroke="#fff" strokeWidth="1.8" /></Svg>
                </StatusButton>
            </Group>
        </StatusBar>
    </Window>
);

export default App;
